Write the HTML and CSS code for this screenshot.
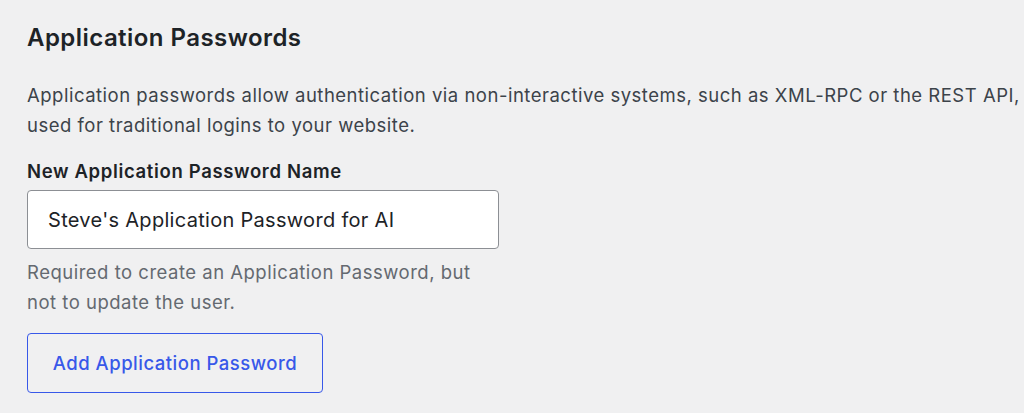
FILE: index.html
```html
<!DOCTYPE html>
<html lang="en">
<head>
    <meta charset="UTF-8">
    <title>Application Passwords</title>
    <link rel="stylesheet" href="styles.css">
</head>
<body>

<div class="section">
    <h2>Application Passwords</h2>
    <p class="intro">Application passwords allow authentication via non-interactive systems, such as XML-RPC or the REST API,<br>used for traditional logins to your website.</p>

    <div class="field">
        <label for="appName">New Application Password Name</label>
        <input type="text" id="appName" value="Steve's Application Password for AI">
        <p class="description">Required to create an Application Password, but not to update the user.</p>
    </div>

    <button type="button" class="button">Add Application Password</button>
</div>

</body>
</html>
```

FILE: styles.css
```css
html, body {
    margin: 0;
    padding: 0;
    background-color: #f0f0f1;
    overflow: hidden;
}
body {
    font-family: Inter, "Noto Sans", sans-serif;
    color: #3c434a;
    font-size: 18.5px;
    letter-spacing: 0.5px;
}
.section {
    padding: 20px 0 0 27px;
}
h2 {
    margin: 0 0 24px;
    font-size: 24px;
    font-weight: 600;
    letter-spacing: 0.45px;
    color: #1d2327;
    line-height: 36px;
}
.intro {
    margin: 0 0 18px;
    white-space: nowrap;
    line-height: 30px;
}
.field label {
    display: block;
    font-weight: 600;
    letter-spacing: 0.65px;
    color: #1d2327;
    line-height: 26px;
    margin-bottom: 6px;
}
.field input {
    display: block;
    width: 472px;
    height: 59px;
    box-sizing: border-box;
    padding: 0 20px;
    border: 1px solid #8c8f94;
    border-radius: 4px;
    background-color: #fff;
    font-family: inherit;
    font-size: 20px;
    letter-spacing: 0.3px;
    color: #1d2327;
}
.description {
    width: 460px;
    margin: 8px 0 0;
    color: #646970;
    line-height: 30px;
}
.button {
    margin-top: 16px;
    width: 296px;
    height: 60px;
    border: 1px solid #3858e9;
    border-radius: 4px;
    background: transparent;
    color: #3858e9;
    font-family: inherit;
    font-size: 18.5px;
    font-weight: 500;
    letter-spacing: 0.5px;
    cursor: pointer;
}
```
